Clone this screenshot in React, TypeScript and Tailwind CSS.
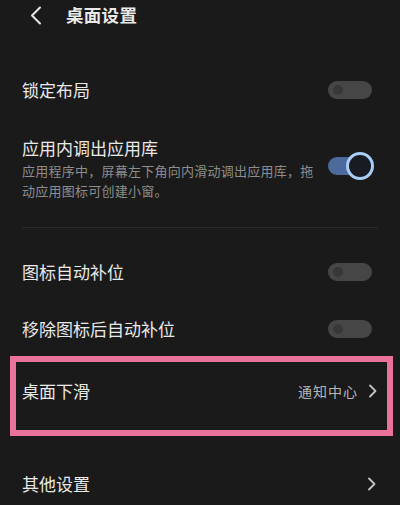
import React from 'react'

const font = { fontFamily: '"Noto Sans CJK SC", "Noto Sans", sans-serif' }

const Chevron = () => (
	<svg width="9" height="14" viewBox="0 0 9 14" fill="none" stroke="#c4c4c4" strokeWidth="1.8" strokeLinecap="round" strokeLinejoin="round">
		<path d="M2 1.5L7.5 7L2 12.5" />
	</svg>
)

const ToggleOff = () => (
	<div className="flex items-center w-[44px] h-[18px] rounded-full bg-[#464646] pl-[5px]">
		<div className="w-[10px] h-[10px] rounded-full bg-[#383838]" />
	</div>
)

const ToggleOn = () => (
	<div className="relative w-[46px] h-[28px]">
		<div className="absolute left-0 top-[5px] w-[34px] h-[18px] rounded-l-full bg-[#4c6b9c]" />
		<div className="absolute right-0 top-0 w-[28px] h-[28px] rounded-full border-[3px] border-[#a9cdf4] bg-[#181b21]" />
	</div>
)

const App = () => {
	return (
		<div className="w-[400px] h-[505px] overflow-hidden bg-[#1a1a1a] text-[#e9e9e9]" style={font}>
			<header className="flex items-center h-[30px]">
				<div className="ml-[29px] w-[37px]">
					<svg width="14" height="19" viewBox="0 0 14 19" fill="none" stroke="#e6e6e6" strokeWidth="2" strokeLinecap="round" strokeLinejoin="round">
						<path d="M11 1.5L3 9.5L11 17.5" />
					</svg>
				</div>
				<span className="text-[17.5px] font-semibold tracking-[0.3px]">桌面设置</span>
			</header>

			<div className="flex items-center justify-between h-[50px] mt-[35px] pl-[22px] pr-[28px]">
				<span className="text-[17px]">锁定布局</span>
				<ToggleOff />
			</div>

			<div className="flex items-start justify-between pt-[21px] pl-[22px] pr-[26px]">
				<div className="w-[300px]">
					<div className="text-[17px] leading-[24px]">应用内调出应用库</div>
					<div className="text-[13px] leading-[20px] text-[#8d8d8d] mt-[1px] tracking-[0.25px]">
						应用程序中，屏幕左下角向内滑动调出应用库，拖动应用图标可创建小窗。
					</div>
				</div>
				<div className="mt-[16px]">
					<ToggleOn />
				</div>
			</div>

			<div className="mx-[22px] mt-[26px] h-px bg-[#2a2a2a]" />

			<div className="flex items-center justify-between h-[60px] mt-[14px] pl-[22px] pr-[28px]">
				<span className="text-[17px]">图标自动补位</span>
				<ToggleOff />
			</div>

			<div className="flex items-center justify-between h-[54px] pl-[22px] pr-[28px]">
				<span className="text-[17px]">移除图标后自动补位</span>
				<ToggleOff />
			</div>

			<div className="ml-[10px] mr-[7px] h-[80px] border-[6px] border-[#ea739c] pt-[17px] pl-[6px] pr-[10px]">
				<div className="flex items-center justify-between h-[24px]">
					<span className="text-[17px]">桌面下滑</span>
					<div className="flex items-center gap-[10px]">
						<span className="text-[14px] text-[#b5b5b5] tracking-[1px]">通知中心</span>
						<Chevron />
					</div>
				</div>
			</div>

			<div className="flex items-center justify-between h-[48px] mt-[24px] pl-[22px] pr-[24px]">
				<span className="text-[17px]">其他设置</span>
				<Chevron />
			</div>
		</div>
	)
}

export default App
